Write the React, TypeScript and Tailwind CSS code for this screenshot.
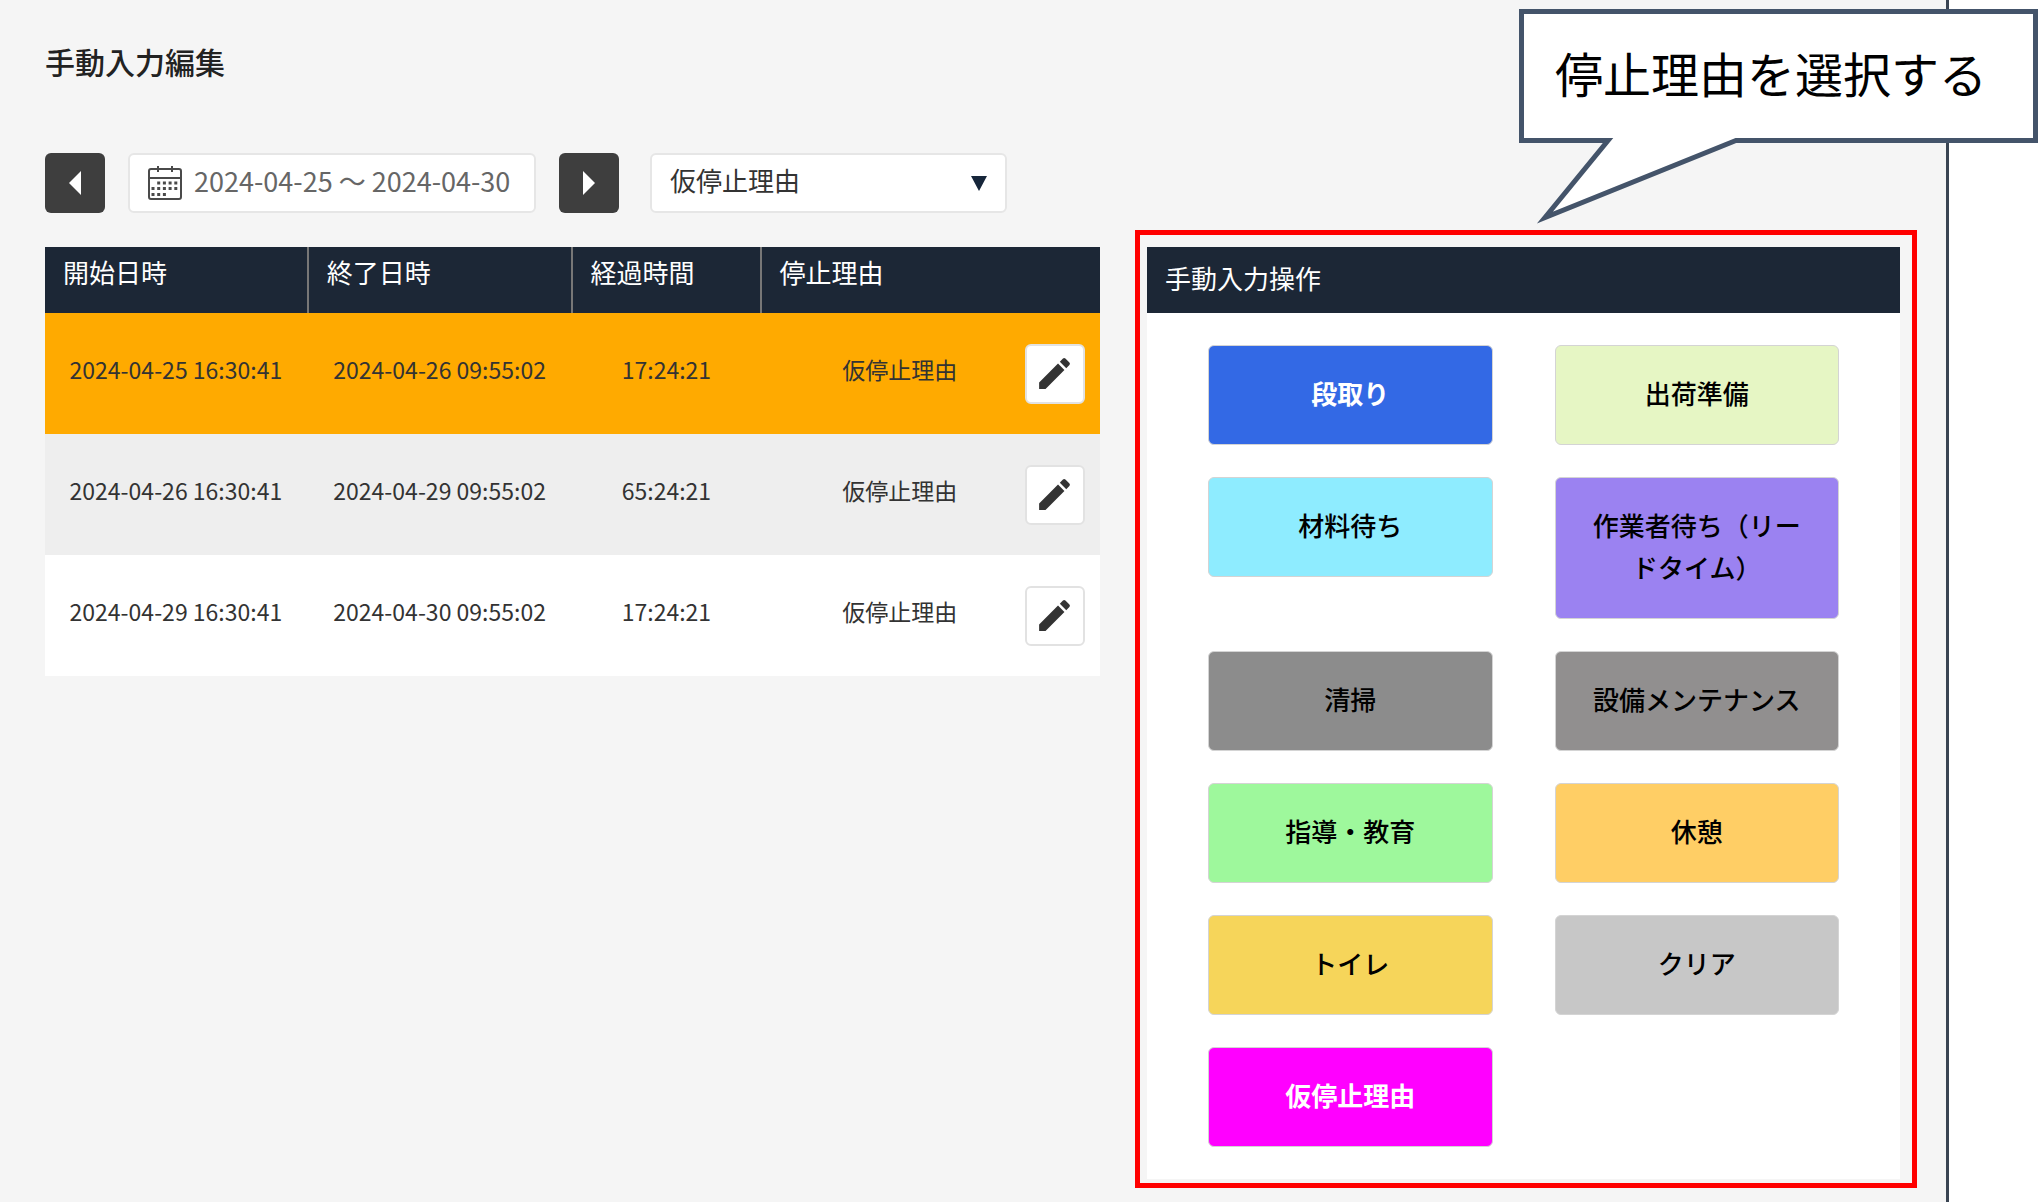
import React, { useState } from 'react';
import clsx from 'clsx';
import { MdEdit } from 'react-icons/md';

interface StopRecord {
  start: string;
  end: string;
  elapsed: string;
  reason: string;
}

interface Reason {
  label: string;
  className: string;
}

const records: StopRecord[] = [
  { start: '2024-04-25 16:30:41', end: '2024-04-26 09:55:02', elapsed: '17:24:21', reason: '仮停止理由' },
  { start: '2024-04-26 16:30:41', end: '2024-04-29 09:55:02', elapsed: '65:24:21', reason: '仮停止理由' },
  { start: '2024-04-29 16:30:41', end: '2024-04-30 09:55:02', elapsed: '17:24:21', reason: '仮停止理由' },
];

const reasons: Reason[] = [
  { label: '段取り', className: 'bg-[#3369e5] text-white font-bold' },
  { label: '出荷準備', className: 'bg-[#e6f6c4] text-black font-medium' },
  { label: '材料待ち', className: 'bg-[#8eecff] text-black font-medium' },
  { label: '作業者待ち（リードタイム）', className: 'bg-[#9b82f1] text-black font-medium' },
  { label: '清掃', className: 'bg-[#8c8c8c] text-black font-medium' },
  { label: '設備メンテナンス', className: 'bg-[#918f8f] text-black font-medium' },
  { label: '指導・教育', className: 'bg-[#9ef89c] text-black font-medium' },
  { label: '休憩', className: 'bg-[#ffce65] text-black font-medium' },
  { label: 'トイレ', className: 'bg-[#f6d55a] text-black font-medium' },
  { label: 'クリア', className: 'bg-[#c7c7c7] text-black font-medium' },
  { label: '仮停止理由', className: 'bg-[#ff00ff] text-white font-bold' },
];

const CalendarIcon: React.FC = () => (
  <svg width="36" height="36" viewBox="0 0 36 36" fill="none" stroke="#4a4a4a" strokeWidth="2" aria-hidden="true">
    <rect x="2" y="4" width="32" height="30" rx="2" />
    <path d="M2 13h32M11 1v6M25 1v6" />
    <path d="M10.200 18h20.400M4.500 23.500h26M4.500 29.500h15" strokeWidth="3" strokeDasharray="3 2.700" />
  </svg>
);

const StepButton: React.FC<{ direction: 'prev' | 'next' }> = ({ direction }) => (
  <button
    type="button"
    aria-label={direction === 'prev' ? '前の期間' : '次の期間'}
    className="flex size-15 items-center justify-center rounded-md bg-[#3e3e3e]"
  >
    <svg width="12" height="24" viewBox="0 0 12 24" fill="#fff" aria-hidden="true">
      <path d={direction === 'prev' ? 'M12 0v24L0 12z' : 'M0 0v24l12-12z'} />
    </svg>
  </button>
);

// Speech bubble that points at the operation panel
const Callout: React.FC = () => (
  <div className="absolute top-[9px] right-0 w-[519px] border-5 border-[#44546a] bg-white">
    <p className="pt-[22px] pb-[30px] pl-[31px] text-5xl leading-[72px] whitespace-nowrap text-black">停止理由を選択する</p>
    <svg className="absolute top-full left-0" width="230" height="90" viewBox="0 0 230 90" aria-hidden="true">
      <path d="M86 0h126v6H82z" fill="#fff" />
      <path d="M60 2.500H84L21 79.500L212 2.500H230" fill="#fff" stroke="#44546a" strokeWidth="5" strokeMiterlimit="10" />
    </svg>
  </div>
);

const App: React.FC = () => {
  const [selected, setSelected] = useState(0);

  return (
    <div className="relative flex min-h-screen bg-white font-['Noto_Sans_CJK_JP',sans-serif] text-[#222]">
      <main className="flex-1 border-r-3 border-[#3a4553] bg-[#f5f5f5] pr-[29px] pl-[45px]">
        <h1 className="pt-[39px] text-3xl leading-[45px] font-medium">手動入力編集</h1>

        {/* Filters */}
        <div className="mt-[69px] flex items-center">
          <StepButton direction="prev" />
          <label className="mx-[23px] flex h-15 w-[408px] items-center gap-[11px] rounded-md border-2 border-[#e6e6e6] bg-white pl-[17px]">
            <CalendarIcon />
            <input
              type="text"
              readOnly
              aria-label="期間"
              value="2024-04-25 ～ 2024-04-30"
              className="min-w-0 flex-1 bg-transparent pb-1 text-[27px] text-[#666] outline-none"
            />
          </label>
          <StepButton direction="next" />
          <div className="relative ml-[31px]">
            <select
              aria-label="停止理由"
              className="h-15 w-[357px] appearance-none rounded-md border-2 border-[#e6e6e6] bg-white pb-2 pl-[18px] text-[26px] text-[#333]"
            >
              <option>仮停止理由</option>
            </select>
            <svg className="pointer-events-none absolute top-[23px] right-5" width="16" height="15" viewBox="0 0 16 15" aria-hidden="true">
              <path d="M0 0h16L8 15z" fill="#16263a" />
            </svg>
          </div>
        </div>

        <div className="mt-[17px] grid grid-cols-[1055fr_782fr] items-start gap-[35px]">
          <table className="mt-[17px] w-full table-fixed border-separate border-spacing-0 bg-white">
            <colgroup>
              <col className="w-[25%]" />
              <col className="w-[25%]" />
              <col className="w-[18%]" />
              <col />
              <col className="w-[75px]" />
            </colgroup>
            <thead>
              <tr className="h-[66px] bg-[#1c2736] text-left align-top text-[26px] leading-[39px] text-white">
                <th className="border-r-2 border-[#777] pt-[5px] pl-[18px] font-normal">開始日時</th>
                <th className="border-r-2 border-[#777] pt-[5px] pl-[18px] font-normal">終了日時</th>
                <th className="border-r-2 border-[#777] pt-[5px] pl-[18px] font-normal">経過時間</th>
                <th colSpan={2} className="pt-[5px] pl-[17px] font-normal">停止理由</th>
              </tr>
            </thead>
            <tbody>
              {records.map((record, i) => (
                <tr
                  key={record.start}
                  onClick={() => setSelected(i)}
                  className={clsx(
                    'h-[121px] text-center text-[23px] text-[#333]',
                    i === selected ? 'bg-[#ffaa00]' : i % 2 === 1 ? 'bg-[#eeeeee]' : 'bg-white'
                  )}
                >
                  <td className="pr-0.5 pb-2">{record.start}</td>
                  <td className="pr-0.5 pb-2">{record.end}</td>
                  <td className="pr-0.5 pb-2">{record.elapsed}</td>
                  <td className="pb-2 pl-3">{record.reason}</td>
                  <td>
                    <button
                      type="button"
                      aria-label="編集"
                      className="flex size-15 items-center justify-center rounded-md border-2 border-[#e2e2e2] bg-white"
                    >
                      <MdEdit className="size-[41px] text-[#333]" />
                    </button>
                  </td>
                </tr>
              ))}
            </tbody>
          </table>

          {/* Highlighted operation panel */}
          <div className="border-5 border-[#ff0000] pt-3 pr-3 pb-1 pl-[7px]">
            <section className="bg-white">
              <h2 className="bg-[#1c2736] pt-[11px] pb-4 pl-[18px] text-[26px] leading-[39px] text-white">手動入力操作</h2>
              <div className="grid grid-cols-2 items-start gap-x-[62px] gap-y-8 px-[61px] py-8">
                {reasons.map((reason) => (
                  <button
                    key={reason.label}
                    type="button"
                    className={clsx(
                      'rounded-md border border-[#d4d4d4] px-7 pt-[26px] pb-[30px] text-[26px] leading-[42px]',
                      reason.className
                    )}
                  >
                    {reason.label}
                  </button>
                ))}
              </div>
            </section>
          </div>
        </div>
      </main>
      <div className="w-[89px] shrink-0" />
      <Callout />
    </div>
  );
};

export default App;
